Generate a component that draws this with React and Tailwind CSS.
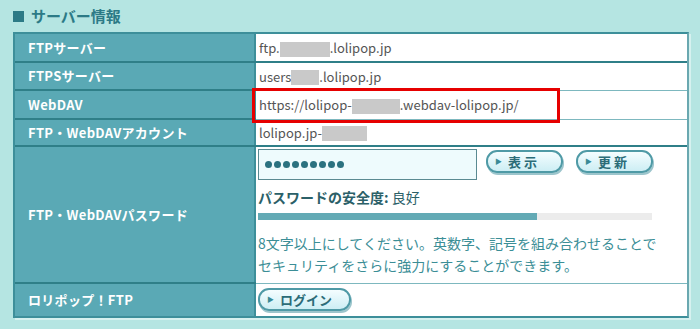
import React from "react";

const F = { fontFamily: '"Noto Sans CJK JP", "Noto Sans", sans-serif' };

function Btn({ children, w }) {
  return (
    <div
      className={`flex items-center h-[23px] ${w} rounded-[11px] border-2 border-[#4f9aa6] bg-gradient-to-b from-[#f4fdff] to-[#cdeef4] shadow-[1px_2px_0_#9cc5cc] text-[#2b6c78] text-[13px] font-bold leading-none`}
    >
      <span className="ml-[7px] mr-[6px] text-[7px] text-[#3a8a96]">▶</span>
      {children}
    </div>
  );
}

function Blur({ w }) {
  return <span className={`inline-block h-[15px] ${w} bg-[#c9c9c9] align-middle`} />;
}

export default function App() {
  const label =
    "bg-[#5aa9b5] text-white text-[13px] font-bold pl-[13px] border-b-2 border-[#2f7f88] align-middle tracking-[0.3px]";
  const val = "bg-white pl-[3px] text-[#555] text-[13px] align-middle";
  return (
    <div className="w-[700px] h-[329px] bg-[#b5e5e2] overflow-hidden" style={F}>
      <div className="flex items-center h-[32px] pl-[13px] text-[15px] font-bold text-[#2c7a86]">
        <span className="inline-block w-[11px] h-[11px] bg-[#2c7a86] mr-[7px]" />
        サーバー情報
      </div>
      <div className="ml-[13px] w-[676px] border-2 border-[#3d8f9a] border-r-[#6aa8b0] shadow-[2px_2px_0_#d6f1ef]">
        <table className="w-full border-collapse">
          <tbody>
            <tr className="h-[28px]">
              <td className={`${label} w-[240px]`}>FTPサーバー</td>
              <td className={`${val} border-l-2 border-l-[#3d8f9a] border-b-2 border-b-[#2f7f88]`}>
                ftp.<Blur w="w-[50px]" />.lolipop.jp
              </td>
            </tr>
            <tr className="h-[28px]">
              <td className={label}>FTPSサーバー</td>
              <td className={`${val} border-l-2 border-l-[#3d8f9a] border-b border-b-[#7db8bf]`}>
                users<Blur w="w-[28px]" />.lolipop.jp
              </td>
            </tr>
            <tr className="h-[29px]">
              <td className={label}>WebDAV</td>
              <td className={`${val} border-l-2 border-l-[#3d8f9a] border-b border-b-[#7db8bf] relative`}>
                https://lolipop-<Blur w="w-[48px]" />.webdav-lolipop.jp/
                <div className="absolute left-[-4px] top-[-3px] w-[308px] h-[35px] border-[3px] border-[#e60000]" />
              </td>
            </tr>
            <tr className="h-[27px]">
              <td className={label}>FTP・WebDAVアカウント</td>
              <td className={`${val} border-l-2 border-l-[#3d8f9a] border-b-2 border-b-[#2f7f88]`}>
                lolipop.jp-<Blur w="w-[45px]" />
              </td>
            </tr>
            <tr className="h-[137px]">
              <td className={label}>FTP・WebDAVパスワード</td>
              <td className="bg-white border-l-2 border-l-[#3d8f9a] border-b border-b-[#7db8bf] align-top pl-[2px] pt-[2px]">
                <div className="flex items-start">
                  <div className="w-[219px] h-[31px] border border-[#5a8a92] bg-[#eefbfd] flex items-center gap-[2px] pl-[6px]">
                    {Array.from({ length: 9 }).map((_, i) => (
                      <span key={i} className="w-[7px] h-[7px] rounded-full bg-[#2b7280]" />
                    ))}
                  </div>
                  <div className="ml-[9px] mt-[1px]">
                    <Btn w="w-[77px]">表&nbsp;示</Btn>
                  </div>
                  <div className="ml-[13px] mt-[1px]">
                    <Btn w="w-[77px]">更&nbsp;新</Btn>
                  </div>
                </div>
                <div className="mt-[7px] text-[14px] text-[#2b6068] leading-[20px]">
                  <span className="font-bold">パスワードの安全度:</span> 良好
                </div>
                <div className="mt-[6px] flex w-[394px] h-[7px] bg-[#ececec]">
                  <div className="w-[279px] h-full bg-[#63aab5]" />
                </div>
                <div className="mt-[12px] text-[14px] text-[#3b8e96] leading-[22px]">
                  8文字以上にしてください。英数字、記号を組み合わせることで
                  <br />
                  セキュリティをさらに強力にすることができます。
                </div>
              </td>
            </tr>
            <tr className="h-[33px]">
              <td className="bg-[#5aa9b5] text-white text-[13px] font-bold pl-[13px] align-middle tracking-[0.3px]">
                ロリポップ！FTP
              </td>
              <td className="bg-white border-l-2 border-l-[#3d8f9a] pl-[2px] align-middle">
                <Btn w="w-[93px]">ログイン</Btn>
              </td>
            </tr>
          </tbody>
        </table>
      </div>
    </div>
  );
}
